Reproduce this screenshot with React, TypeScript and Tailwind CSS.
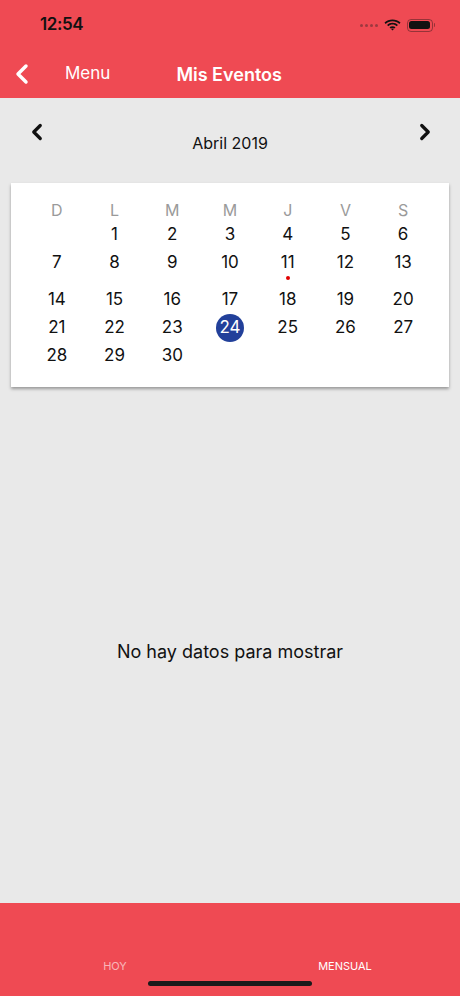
import { ChevronLeft, ChevronRight } from "lucide-react"

const RED = "bg-[#ef4a53]"

const weekDays = ["D", "L", "M", "M", "J", "V", "S"]

// Abril 2019 empieza en lunes
const weeks: (number | null)[][] = [
  [null, 1, 2, 3, 4, 5, 6],
  [7, 8, 9, 10, 11, 12, 13],
  [14, 15, 16, 17, 18, 19, 20],
  [21, 22, 23, 24, 25, 26, 27],
  [28, 29, 30, null, null, null, null],
]

const marked = [11]
const selected = 24

function StatusBar() {
  return (
    <div className="flex h-[50px] items-center justify-between pl-[40px] pr-[25px]">
      <span className="text-[17px] font-semibold tracking-tight text-[#111]">12:54</span>
      <div className="flex items-center gap-[6px]">
        <div className="flex items-end gap-[2px] opacity-40">
          {[0, 1, 2, 3].map((i) => (
            <span key={i} className="h-[3px] w-[3px] rounded-full bg-[#222]" />
          ))}
        </div>
        <svg width="17" height="12" viewBox="0 0 17 12">
          <path d="M8.5 2.2c2.6 0 5 1 6.8 2.7l1.2-1.3C14.4 1.6 11.6.4 8.5.4S2.6 1.6.5 3.6l1.2 1.3C3.5 3.2 5.9 2.2 8.5 2.2z" fill="#111" />
          <path d="M8.5 5.6c1.6 0 3.1.6 4.2 1.6l1.2-1.3C12.5 4.6 10.6 3.8 8.5 3.8S4.5 4.6 3.1 5.9l1.2 1.3c1.1-1 2.6-1.6 4.2-1.6z" fill="#111" />
          <path d="M8.5 8.9c.7 0 1.3.3 1.8.7l1.2-1.3c-.8-.7-1.8-1.1-3-1.1s-2.2.4-3 1.1l1.2 1.3c.5-.4 1.1-.7 1.8-.7zM8.5 11.6l1.4-1.5c-.4-.3-.9-.5-1.4-.5s-1 .2-1.4.5z" fill="#111" />
        </svg>
        <div className="flex items-center">
          <div className="flex h-[13px] w-[26px] items-center rounded-[4px] border border-[#111]/40 p-[1.5px]">
            <div className="h-full w-full rounded-[2.5px] bg-[#111]" />
          </div>
          <div className="ml-[1px] h-[4px] w-[1.5px] rounded-r bg-[#111]/40" />
        </div>
      </div>
    </div>
  )
}

function NavBar() {
  return (
    <div className="flex h-[48px] items-center">
      <ChevronLeft className="ml-[6px] h-[32px] w-[32px] text-white" strokeWidth={2.6} />
      <span className="ml-[27px] text-[17px] text-white">Menu</span>
      <span className="ml-[66px] text-[18px] font-semibold text-white">Mis Eventos</span>
    </div>
  )
}

function Calendar() {
  return (
    <div className="mx-[11px] bg-white px-[17px] pb-[17px] pt-[16px] shadow-[0_2px_3px_rgba(0,0,0,0.35)]">
      <div className="grid grid-cols-7">
        {weekDays.map((d, i) => (
          <div key={i} className="flex h-[22px] items-center justify-center text-[16px] text-[#9a9a9a]">
            {d}
          </div>
        ))}
      </div>
      {weeks.map((week, wi) => {
        const hasDot = week.some((d) => d !== null && marked.includes(d))
        return (
          <div key={wi} className={`grid grid-cols-7 ${hasDot ? "h-[37px]" : "h-[28px]"}`}>
            {week.map((d, di) => (
              <div key={di} className="flex flex-col items-center">
                {d !== null && (
                  <div
                    className={`flex h-[28px] w-[28px] items-center justify-center rounded-full text-[17px] ${
                      d === selected ? "bg-[#22409a] text-white" : "text-[#111]"
                    }`}
                  >
                    {d}
                  </div>
                )}
                {d !== null && marked.includes(d) && (
                  <span className="mt-[-1px] h-[4px] w-[4px] rounded-full bg-[#e00000]" />
                )}
              </div>
            ))}
          </div>
        )
      })}
    </div>
  )
}

export default function App() {
  return (
    <div
      className="flex h-[996px] w-[460px] flex-col overflow-hidden bg-[#e9e9e9]"
      style={{ fontFamily: "Inter, 'Noto Sans', sans-serif" }}
    >
      <header className={RED}>
        <StatusBar />
        <NavBar />
      </header>

      <main className="flex flex-1 flex-col">
        <div className="relative h-[85px]">
          <ChevronLeft className="absolute left-[24px] top-[21px] h-[26px] w-[26px] text-[#111]" strokeWidth={3} />
          <span className="absolute left-0 right-0 top-[33px] text-center text-[16px] text-[#111]">Abril 2019</span>
          <ChevronRight className="absolute right-[22px] top-[21px] h-[26px] w-[26px] text-[#111]" strokeWidth={3} />
        </div>
        <Calendar />
        <div className="flex flex-1 items-center justify-center pt-[12px]">
          <span className="text-[18px] text-[#111]">No hay datos para mostrar</span>
        </div>
      </main>

      <footer className={`${RED} relative h-[93px]`}>
        <div className="grid h-full grid-cols-2 pb-[22px]">
          <div className="flex items-end justify-center">
            <span className="text-[11px] text-white/60">HOY</span>
          </div>
          <div className="flex items-end justify-center">
            <span className="text-[11px] text-white">MENSUAL</span>
          </div>
        </div>
        <div className="absolute bottom-[10px] left-[148px] h-[5px] w-[164px] rounded-full bg-[#1a1a1a]" />
      </footer>
    </div>
  )
}
